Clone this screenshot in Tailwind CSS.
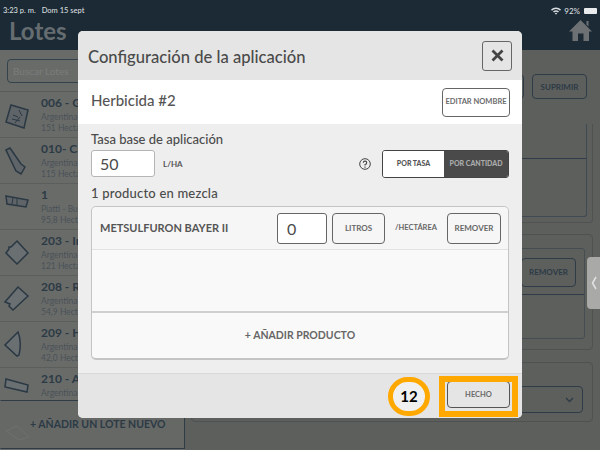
<!DOCTYPE html>
<html lang="es">
<head>
<meta charset="UTF-8">
<title>Configuración de la aplicación</title>
<script src="https://cdn.jsdelivr.net/npm/@tailwindcss/browser@4"></script>
</head>
<body class="font-['Lato',sans-serif]">
<div class="relative w-[600px] h-[450px] overflow-hidden bg-[#5d5f5d] flex flex-col">

  <!-- header -->
  <div class="h-[50px] flex-none bg-[#1b2a35] px-[9px] relative">
    <div class="h-[11px] flex items-center justify-between text-[7.500px] font-medium text-[#d8dcdf] pt-[11px]">
      <div class="flex gap-[6px] -ml-[6px]"><span>3:23 p. m.</span><span>Dom 15 sept</span></div>
      <div class="flex items-center gap-[3px] -mr-[6px] text-[8px]">
        <svg width="10" height="8" viewBox="0 0 10 8" fill="#d8dcdf"><path d="M0 2.6a7 7 0 0 1 10 0L9 3.7a5.600 5.600 0 0 0-8 0zM2 4.600a4.300 4.300 0 0 1 6 0L7 5.600a2.900 2.900 0 0 0-4 0zM3.800 6.300a1.700 1.700 0 0 1 2.400 0L5 7.700z"/></svg>
        <span>92%</span>
        <div class="ml-[1px] w-[13px] h-[6px] rounded-[1px] bg-[#e8eaeb]"></div>
      </div>
    </div>
    <div class="text-[24px] leading-[29px] font-bold text-[#666d71] mt-[5px]">Lotes</div>
    <svg class="absolute left-[569px] top-[20px]" width="23" height="22" viewBox="0 0 23 22" fill="#6e7173"><path d="M11.500 0 L23 11.500 L20 11.500 L20 21 L14.500 21 L14.500 13.500 L9 13.500 L9 21 L3.500 21 L3.500 11.500 L0 11.500 Z"/><path d="M17.500 1h2v5.500l-2-2z"/></svg>
  </div>

  <div class="flex flex-1 min-h-0">
    <!-- lot list -->
    <div class="w-[185px] flex-none flex flex-col bg-[#696b69] relative">
      <div class="h-[42px] flex-none px-[7px] pt-[9px] border-b border-[#595b5a]">
        <div class="h-[24px] border border-[#33424d] rounded-[4px] pl-[5px] text-[10px] leading-[22px] text-[#7a7c7a]">Buscar Lotes</div>
      </div>
      <div class="flex-1 min-h-0 overflow-hidden">
        <div class="h-[46px] flex border-b border-[#5c5e5c]">
          <svg class="w-[41px] h-[46px] flex-none" viewBox="0 0 41 46" fill="#5f6468" stroke="#2a3843" stroke-width="1.500"><path d="M11 13 L28 18 L24 36 L6 30 Z"/><path d="M13 23l5 2M12 27l8 2M19 18l3 6M15 31l5-6" stroke-width="1"/></svg>
          <div class="pt-[3px]"><div class="text-[12px] leading-[15px] font-bold text-[#2c3a45]">006 - G</div><div class="text-[8.500px] leading-[11px] mt-[2px] text-[#4a5257]">Argentina</div><div class="text-[8.500px] leading-[11px] text-[#4a5257]">151 Hectáreas</div></div>
        </div>
        <div class="h-[46px] flex border-b border-[#5c5e5c]">
          <svg class="w-[41px] h-[46px] flex-none" viewBox="0 0 41 46" fill="#5f6468" stroke="#2a3843" stroke-width="1.500"><path d="M6 12 L10 10 L21 26 L25 29 L21 36 L16 33 Z"/></svg>
          <div class="pt-[3px]"><div class="text-[12px] leading-[15px] font-bold text-[#2c3a45]">010- Ca</div><div class="text-[8.500px] leading-[11px] mt-[2px] text-[#4a5257]">Argentina</div><div class="text-[8.500px] leading-[11px] text-[#4a5257]">115 Hectáreas</div></div>
        </div>
        <div class="h-[46px] flex border-b border-[#5c5e5c]">
          <svg class="w-[41px] h-[46px] flex-none" viewBox="0 0 41 46" fill="#5f6468" stroke="#2a3843" stroke-width="1.500"><path d="M6 12 L28 16 L26 23 L7 20 Z"/><path d="M13 14l-1 6M17 15v6" stroke-width="1"/></svg>
          <div class="pt-[3px]"><div class="text-[12px] leading-[15px] font-bold text-[#2c3a45]">1</div><div class="text-[8.500px] leading-[11px] mt-[2px] text-[#4a5257]">Piatti - Buenos</div><div class="text-[8.500px] leading-[11px] text-[#4a5257]">95,8 Hectáreas</div></div>
        </div>
        <div class="h-[46px] flex border-b border-[#5c5e5c]">
          <svg class="w-[41px] h-[46px] flex-none" viewBox="0 0 41 46" fill="#6a6f72" stroke="#2a3843" stroke-width="1.500"><path d="M17 11 L28 23 L17 34 L6 23 L9 19 L9 17 L11 17 Z"/></svg>
          <div class="pt-[3px]"><div class="text-[12px] leading-[15px] font-bold text-[#2c3a45]">203 - In</div><div class="text-[8.500px] leading-[11px] mt-[2px] text-[#4a5257]">Argentina</div><div class="text-[8.500px] leading-[11px] text-[#4a5257]">121 Hectáreas</div></div>
        </div>
        <div class="h-[46px] flex border-b border-[#5c5e5c]">
          <svg class="w-[41px] h-[46px] flex-none" viewBox="0 0 41 46" fill="#6a6f72" stroke="#2a3843" stroke-width="1.500"><path d="M18 11 L28 20 L13 34 L9 30 L10 28 L5 26 Z"/></svg>
          <div class="pt-[3px]"><div class="text-[12px] leading-[15px] font-bold text-[#2c3a45]">208 - R</div><div class="text-[8.500px] leading-[11px] mt-[2px] text-[#4a5257]">Argentina</div><div class="text-[8.500px] leading-[11px] text-[#4a5257]">54,9 Hectáreas</div></div>
        </div>
        <div class="h-[46px] flex border-b border-[#5c5e5c]">
          <svg class="w-[41px] h-[46px] flex-none" viewBox="0 0 41 46" fill="#6a6f72" stroke="#2a3843" stroke-width="1.500"><path d="M18 10 Q22 20 19 33 L17 34 L5 23 Z"/></svg>
          <div class="pt-[3px]"><div class="text-[12px] leading-[15px] font-bold text-[#2c3a45]">209 - H</div><div class="text-[8.500px] leading-[11px] mt-[2px] text-[#4a5257]">Argentina</div><div class="text-[8.500px] leading-[11px] text-[#4a5257]">42,0 Hectáreas</div></div>
        </div>
        <div class="h-[46px] flex">
          <svg class="w-[41px] h-[46px] flex-none" viewBox="0 0 41 46" fill="#6a6f72" stroke="#2a3843" stroke-width="1.500"><path d="M6 11 L28 17 L27 24 L5 19 Z"/></svg>
          <div class="pt-[3px]"><div class="text-[12px] leading-[15px] font-bold text-[#2c3a45]">210 - A</div><div class="text-[8.500px] leading-[11px] mt-[2px] text-[#4a5257]">Argentina</div></div>
        </div>
      </div>
      <div class="relative h-[49px] flex-none mb-[1px] border border-t-[#2f3c47] border-r-[#2f3c47] border-b-[#2f3c47] border-l-transparent bg-[#666866] flex items-center pl-[29px] pt-[1px] text-[10.500px] font-bold text-[#2c3a45]">
        <svg class="absolute left-[4px] top-[24px]" width="25" height="16" viewBox="0 0 25 16" fill="none" stroke="#6f716f"><path d="M1 6L12 1L24 12L14 15Z"/></svg>
        + AÑADIR UN LOTE NUEVO
      </div>
    </div>

    <!-- right side, mostly behind the dialog -->
    <div class="flex-1 flex flex-col pl-[6px] pr-[7px] items-end">
      <div class="h-[25px] mt-[24px] mr-[6px] flex-none flex gap-[8px]">
        <div class="w-[56px] border border-[#2f3c47] rounded-[4px]"></div>
        <div class="w-[55px] border border-[#2f3c47] rounded-[4px] flex items-center justify-center text-[8px] font-bold text-[#2c3a45]">SUPRIMIR</div>
      </div>
      <div class="mt-[25px] w-full h-[99px] flex-none border border-[#4f5251] rounded-b-[4px] border-t-0 pr-[5px] pb-[5px]">
        <div class="h-full border border-[#3f4a52] border-t-0 rounded-b-[3px]"><div class="h-[35px] border-b border-[#2f3c47]"></div></div>
      </div>
      <div class="mt-[11px] w-full h-[116px] flex-none border border-[#4f5251] rounded-[4px] pt-[13px] pr-[7px]">
        <div class="h-[91px] border border-[#454d52] rounded-[3px]">
          <div class="h-[46px] border-b border-[#2f3c47] flex justify-end items-center pr-[8px] pt-[1px]">
            <div class="w-[55px] h-[29px] border border-[#2f3c47] rounded-[4px] flex items-center justify-center text-[8px] font-bold text-[#2c3a45]">REMOVER</div>
          </div>
        </div>
      </div>
      <div class="mt-[12px] w-full h-[60px] flex-none border border-[#4f5251] rounded-[4px] pr-[9px] pt-[23px]">
        <div class="h-[27px] border border-[#2f3c47] rounded-[4px] flex items-center justify-end pr-[8px]">
          <svg width="9" height="6" viewBox="0 0 9 6" fill="none" stroke="#2c3a45" stroke-width="1.300"><path d="M1 1l3.500 3.500L8 1"/></svg>
        </div>
      </div>
    </div>
  </div>

  <!-- side handle -->
  <div class="absolute left-[587px] top-[257px] w-[13px] h-[52px] rounded-l-[4px] bg-[#a9a9a8] flex items-center justify-center">
    <svg width="6" height="14" viewBox="0 0 6 14" fill="none" stroke="#e2e2e2" stroke-width="1.500"><path d="M5 1L1.500 7L5 13"/></svg>
  </div>

  <!-- dialog -->
  <div class="absolute left-[78px] top-[31px] w-[444px] h-[387px] rounded-[5px] overflow-hidden bg-[#eeeeee] flex flex-col text-[#4b4b4b]">
    <div class="h-[49px] flex-none bg-[#e5e5e5] flex items-center justify-between pl-[10px] pr-[10px]">
      <div class="text-[16.600px] font-medium text-[#4a4a4a] pt-[4px]">Configuración de la aplicación</div>
      <div class="w-[30px] h-[30px] border border-[#666] rounded-[3px] flex items-center justify-center">
        <svg width="13" height="13" viewBox="0 0 13 13" fill="none" stroke="#444" stroke-width="2.800"><path d="M1.500 1.500l10 10M11.500 1.500l-10 10"/></svg>
      </div>
    </div>
    <div class="h-[44px] flex-none bg-white flex items-center justify-between pl-[13px] pr-[12px]">
      <div class="text-[15px] font-medium text-[#555] pb-[3px]">Herbicida #2</div>
      <div class="w-[68px] h-[29px] border border-[#666] rounded-[4px] flex items-center justify-center text-[7.500px] font-bold text-[#6b6b6b] whitespace-nowrap">EDITAR NOMBRE</div>
    </div>
    <div class="flex-1 px-[13px] pt-[7px]">
      <div class="text-[13px] leading-[16px] font-medium">Tasa base de aplicación</div>
      <div class="flex items-center mt-[3px] h-[27px]">
        <div class="w-[64px] h-[27px] bg-white border border-[#b5b5b5] rounded-[3px] pl-[8px] text-[16px] leading-[25px]">50</div>
        <div class="ml-[8px] text-[8px] font-bold text-[#555]">L/HA</div>
        <svg class="ml-auto mr-[11px]" width="12" height="12" viewBox="0 0 12 12" fill="none" stroke="#444"><circle cx="6" cy="6" r="5.300"/><path d="M4.300 4.700A1.700 1.700 0 1 1 6 6.500V7.500" stroke-width="1.100"/><path d="M6 8.500v1.200" stroke-width="1.100"/></svg>
        <div class="w-[127px] h-[28px] flex border border-[#444] rounded-[3px] overflow-hidden text-[7px] font-black">
          <div class="w-[61px] bg-white flex items-center justify-center text-[#555]">POR TASA</div>
          <div class="flex-1 bg-[#4a4a4a] flex items-center justify-center text-[#ababab]">POR CANTIDAD</div>
        </div>
      </div>
      <div class="text-[13px] tracking-[0.2px] leading-[16px] font-medium mt-[8px]">1 producto en mezcla</div>
      <div class="mt-[5px] h-[154px] w-[418px] border border-[#c4c4c4] border-b-2 rounded-[5px] bg-[#f9f9f9] flex flex-col">
        <div class="h-[43px] flex-none flex items-center border-b border-[#e2e2e2] pl-[8px] bg-[#f6f6f6] rounded-t-[5px]">
          <div class="w-[177px] text-[11px] font-bold text-[#555]">METSULFURON BAYER II</div>
          <div class="w-[50px] h-[31px] bg-white border border-[#666] rounded-[3px] pl-[9px] text-[16px] leading-[29px]">0</div>
          <div class="ml-[5px] w-[53px] h-[31px] border border-[#666] rounded-[4px] flex items-center justify-center text-[8px] font-bold text-[#666]">LITROS</div>
          <div class="ml-[10px] w-[42px] text-[7.500px] font-bold text-[#666] whitespace-nowrap">/HECTÁREA</div>
          <div class="ml-[10px] w-[54px] h-[31px] border border-[#666] rounded-[4px] flex items-center justify-center text-[8px] font-bold text-[#666]">REMOVER</div>
        </div>
        <div class="h-[63px] flex-none border-b-2 border-[#cfcfcf]"></div>
        <div class="flex-1 flex items-center justify-center text-[10.500px] font-bold text-[#666]">+ AÑADIR PRODUCTO</div>
      </div>
    </div>
    <div class="h-[45px] flex-none bg-[#e5e5e5] border-t border-[#d8d8d8] flex items-center justify-end pr-[12px] pb-[3px]">
      <div class="w-[63px] h-[27px] border border-[#555] rounded-[4px] flex items-center justify-center text-[7.500px] font-bold text-[#6b6b6b]">HECHO</div>
    </div>
  </div>

  <!-- callouts -->
  <div class="absolute left-[388px] top-[377px] w-[42px] h-[39px] rounded-full border-[5px] border-[#ffa800] bg-[#f0f0f0] flex items-center justify-center text-[15px] font-bold text-black">12</div>
  <div class="absolute left-[439px] top-[376px] w-[79px] h-[41px] border-[6px] border-[#ffa800]"></div>
</div>
</body>
</html>
